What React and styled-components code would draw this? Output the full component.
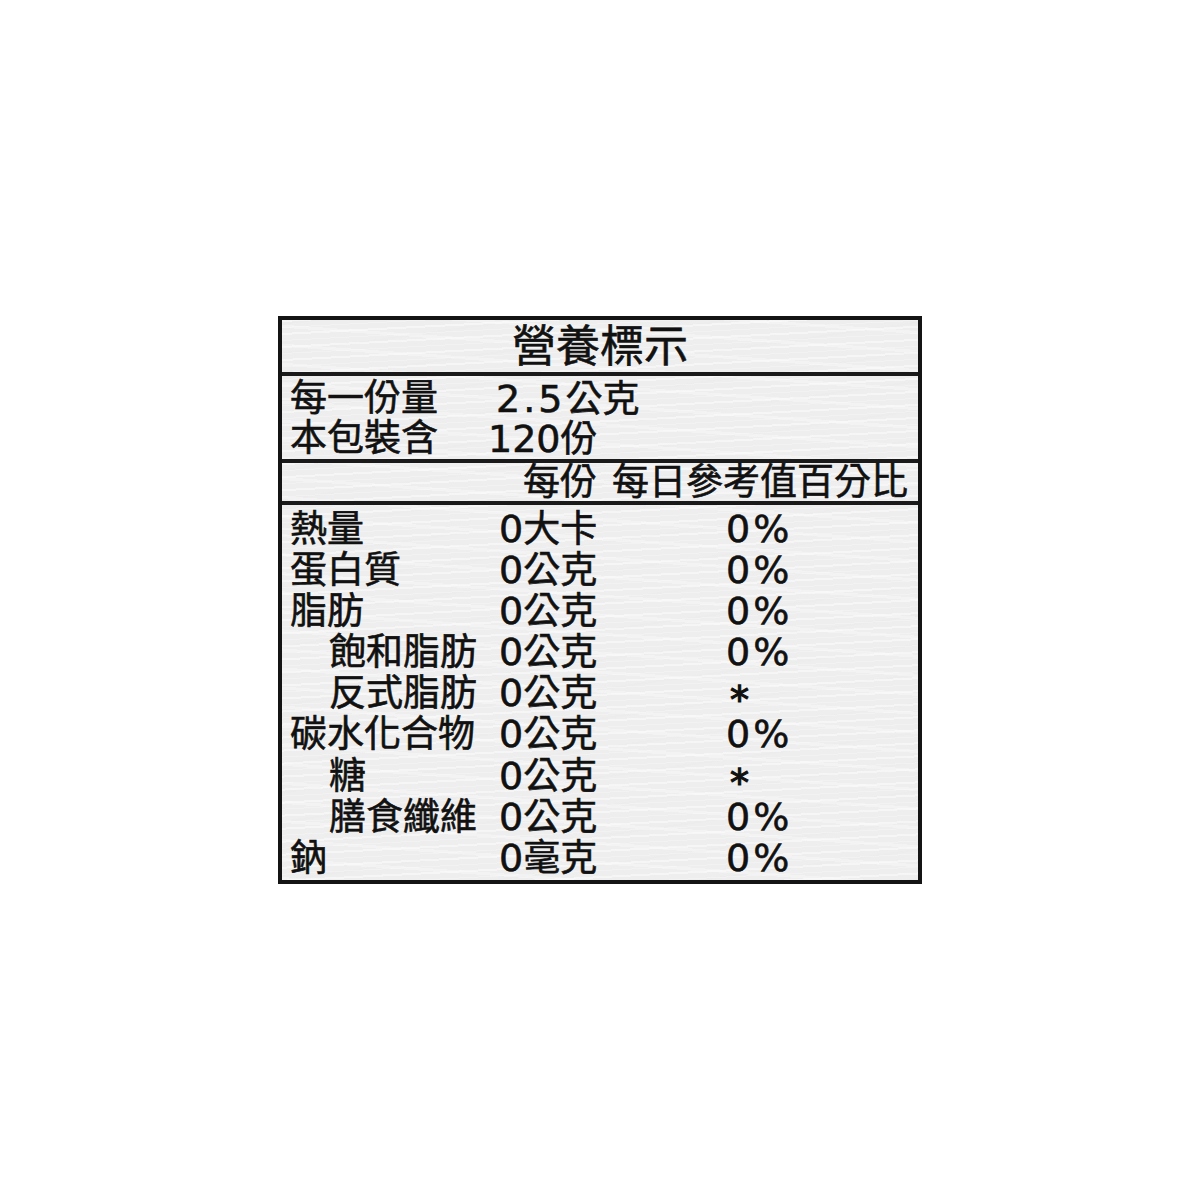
import React from 'react';
import styled, { createGlobalStyle } from 'styled-components';

const GlobalStyle = createGlobalStyle`
  html, body {
    margin: 0;
    padding: 0;
    background: #ffffff;
  }
`;

const Page = styled.div`
  width: 1200px;
  height: 1200px;
  display: flex;
  align-items: center;
  justify-content: center;
  font-family: "DejaVu Sans", "Noto Sans CJK TC", sans-serif;
  color: #111;
  -webkit-text-stroke: 0.6px #111;
`;

const Label = styled.section`
  width: 644px;
  box-sizing: border-box;
  border: 4px solid #141414;
  display: flex;
  flex-direction: column;
  background-color: #eeeeee;
  background-image:
    repeating-linear-gradient(177deg, rgba(255,255,255,0.45) 0 2px, transparent 2px 7px, rgba(255,255,255,0.25) 7px 8px, transparent 8px 13px),
    repeating-linear-gradient(4deg, rgba(255,255,255,0.3) 0 3px, transparent 3px 19px),
    repeating-linear-gradient(-8deg, rgba(232,232,232,0.25) 0 2px, transparent 2px 29px);
`;

const Title = styled.h1`
  margin: 0;
  box-sizing: content-box;
  height: 50px;
  padding-top: 2px;
  border-bottom: 4px solid #1a1a1a;
  display: flex;
  align-items: center;
  justify-content: center;
  font-size: 44px;
  font-weight: 400;
  line-height: 52px;
`;

const Section = styled.div`
  height: ${(p) => p.$height}px;
  box-sizing: border-box;
  padding: ${(p) => p.$pad || '0'};
  border-bottom: ${(p) => (p.$last ? 'none' : '4px solid #1a1a1a')};
  display: flex;
  flex-direction: column;
  justify-content: ${(p) => (p.$top ? 'flex-start' : 'center')};
`;

const Row = styled.div`
  display: grid;
  grid-template-columns: 209px 98px 1fr;
  align-items: center;
  padding-left: 8px;
  height: ${(p) => p.$h}px;
  line-height: ${(p) => p.$h}px;
  font-size: 37px;
  white-space: nowrap;
`;

const Name = styled.span`
  padding-left: ${(p) => (p.$indent ? '39px' : '0')};
`;

const Amount = styled.span`
  font-size: 38px;
  letter-spacing: ${(p) => p.$track || 0}px;
  margin-left: ${(p) => p.$shift || 0}px;
  justify-self: ${(p) => (p.$end ? 'end' : 'start')};
`;

const Cjk = styled.span`
  font-size: 37px;
  letter-spacing: 0;
`;

const Percent = styled.span`
  font-size: 38px;
  letter-spacing: 3px;
  padding-left: 129px;
`;

const StarCell = styled.span`
  font-size: 38px;
  padding-left: 133px;
`;

const StarGlyph = styled.span`
  line-height: 0;
  vertical-align: -7px;
  -webkit-text-stroke: 1.2px #111;
`;

const HeadNote = styled.span`
  padding-left: 15px;
`;

const nutrients = [
  { name: '熱量', value: '0', unit: '大卡', pct: '0%' },
  { name: '蛋白質', value: '0', unit: '公克', pct: '0%' },
  { name: '脂肪', value: '0', unit: '公克', pct: '0%' },
  { name: '飽和脂肪', value: '0', unit: '公克', pct: '0%', indent: true },
  { name: '反式脂肪', value: '0', unit: '公克', pct: '*', indent: true },
  { name: '碳水化合物', value: '0', unit: '公克', pct: '0%' },
  { name: '糖', value: '0', unit: '公克', pct: '*', indent: true },
  { name: '膳食纖維', value: '0', unit: '公克', pct: '0%', indent: true },
  { name: '鈉', value: '0', unit: '毫克', pct: '0%' },
];

const App = () => {
  return (
    <Page>
      <GlobalStyle />
      <Label>
        <Title>營養標示</Title>

        <Section $height={87} $pad="2px 0 0">
          <Row $h={40}>
            <Name>每一份量</Name>
            <Amount $shift={-3} $track={3}>2.5<Cjk>公克</Cjk></Amount>
          </Row>
          <Row $h={40}>
            <Name>本包裝含</Name>
            <Amount $shift={-11}>120<Cjk>份</Cjk></Amount>
          </Row>
        </Section>

        <Section $height={42}>
          <Row $h={38}>
            <span />
            <Amount $end><Cjk>每份</Cjk></Amount>
            <HeadNote>每日參考值百分比</HeadNote>
          </Row>
        </Section>

        <Section $height={375} $pad="4px 0 0" $top $last>
          {nutrients.map((n) => (
            <Row key={n.name} $h={41.1}>
              <Name $indent={n.indent}>{n.name}</Name>
              <Amount>{n.value}<Cjk>{n.unit}</Cjk></Amount>
              {n.pct === '*' ? (
                <StarCell><StarGlyph>*</StarGlyph></StarCell>
              ) : (
                <Percent>{n.pct}</Percent>
              )}
            </Row>
          ))}
        </Section>
      </Label>
    </Page>
  );
};

export default App;
